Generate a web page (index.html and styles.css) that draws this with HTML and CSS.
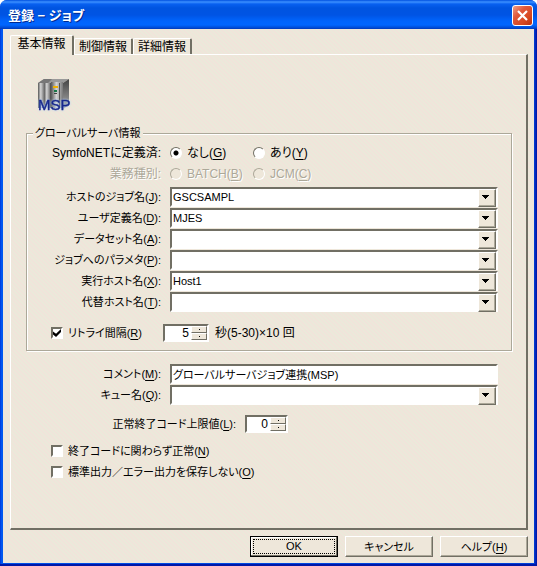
FILE: index.html
```html
<!DOCTYPE html>
<html lang="ja">
<head>
<meta charset="utf-8">
<meta name="viewport" content="width=device-width, initial-scale=1">
<title>登録 - ジョブ</title>
<link rel="stylesheet" href="styles.css">
</head>
<body>
<form class="dialog">
  <header class="titlebar">
    <h1 class="title">登録 − ジョブ</h1>
    <button class="close" type="button" aria-label="閉じる">
      <svg viewBox="0 0 19 19" width="19" height="19" aria-hidden="true"><path d="M5 5l9 9M14 5l-9 9" stroke="#fff" stroke-width="2.2"/></svg>
    </button>
  </header>
  <div class="client">
    <div class="tabs" role="tablist">
      <button class="tab tab-active" type="button" role="tab" aria-selected="true">基本情報</button>
      <button class="tab" type="button" role="tab" aria-selected="false">制御情報</button>
      <button class="tab" type="button" role="tab" aria-selected="false">詳細情報</button>
    </div>
    <main class="panel">
      <svg class="job-icon" viewBox="0 0 36 36" width="36" height="36" role="img" aria-label="MSP">
        <defs>
          <linearGradient id="metal" x1="0" x2="1" y1="0" y2="0">
            <stop offset="0" stop-color="#555"/><stop offset=".45" stop-color="#d4d4d4"/><stop offset="1" stop-color="#777"/>
          </linearGradient>
          <linearGradient id="side" x1="0" x2="0" y1="0" y2="1">
            <stop offset="0" stop-color="#444"/><stop offset="1" stop-color="#aaa"/>
          </linearGradient>
        </defs>
        <path d="M1 5l6-4h25l-6 4z" fill="#999"/>
        <path d="M1 5l6-4h8l-4 4z" fill="#777"/>
        <path d="M26 5l6-4v26l-6 4z" fill="url(#side)"/>
        <rect x="1" y="5" width="6" height="25" fill="url(#metal)"/>
        <rect x="7" y="5" width="6" height="25" fill="url(#metal)"/>
        <rect x="14" y="4" width="12" height="26" fill="url(#metal)"/>
        <path d="M13.500 5v25M22.500 5v25" stroke="#555"/>
        <rect x="16" y="8" width="5" height="2" fill="#f0b000"/>
        <rect x="17" y="12" width="3" height="2" fill="#187848"/>
        <rect x="17" y="15" width="3" height="1" fill="#444"/>
        <text class="icon-text" x="1" y="32" font-size="15">MSP</text>
      </svg>

      <fieldset class="group">
        <legend>グローバルサーバ情報</legend>
        <div class="row row-radio" role="radiogroup" aria-labelledby="sym">
          <span class="label" id="sym">SymfoNETに定義済:</span>
          <div class="radios">
            <label class="choice"><input type="radio" name="sym" checked><span>なし(<u>G</u>)</span></label>
            <label class="choice"><input type="radio" name="sym"><span>あり(<u>Y</u>)</span></label>
          </div>
        </div>
        <div class="row row-radio disabled" role="radiogroup" aria-labelledby="kind">
          <span class="label" id="kind">業務種別:</span>
          <div class="radios">
            <label class="choice"><input type="radio" name="kind" disabled><span>BATCH(<u>B</u>)</span></label>
            <label class="choice"><input type="radio" name="kind" disabled><span>JCM(<u>C</u>)</span></label>
          </div>
        </div>
        <div class="combos">
          <div class="row"><label class="label" for="job">ホストのジョブ名(<u>J</u>):</label><div class="combo"><select id="job"><option>GSCSAMPL</option></select></div></div>
          <div class="row"><label class="label" for="user">ユーザ定義名(<u>D</u>):</label><div class="combo"><select id="user"><option>MJES</option></select></div></div>
          <div class="row"><label class="label" for="data">データセット名(<u>A</u>):</label><div class="combo"><select id="data"><option></option></select></div></div>
          <div class="row"><label class="label" for="param">ジョブへのパラメタ(<u>P</u>):</label><div class="combo"><select id="param"><option></option></select></div></div>
          <div class="row"><label class="label" for="host">実行ホスト名(<u>X</u>):</label><div class="combo"><select id="host"><option>Host1</option></select></div></div>
          <div class="row"><label class="label" for="alt">代替ホスト名(<u>T</u>):</label><div class="combo"><select id="alt"><option></option></select></div></div>
        </div>
        <div class="retry">
          <label class="choice"><input type="checkbox" checked><span>リトライ間隔(<u>R</u>)</span></label>
          <div class="spinner">
            <input type="text" inputmode="numeric" value="5" aria-label="リトライ間隔">
            <div class="steps"><button type="button" aria-label="増やす"></button><button type="button" aria-label="減らす"></button></div>
          </div>
          <span class="unit">秒(5-30)×10 回</span>
        </div>
      </fieldset>

      <div class="extras">
        <div class="row"><label class="label" for="comment">コメント(<u>M</u>):</label><input class="text" id="comment" type="text" value="グローバルサーバジョブ連携(MSP)"></div>
        <div class="row"><label class="label" for="queue">キュー名(<u>Q</u>):</label><div class="combo"><select id="queue"><option></option></select></div></div>
        <div class="limit">
          <label class="label" for="limit">正常終了コード上限値(<u>L</u>):</label>
          <div class="spinner">
            <input id="limit" type="text" inputmode="numeric" value="0">
            <div class="steps"><button type="button" aria-label="増やす"></button><button type="button" aria-label="減らす"></button></div>
          </div>
        </div>
        <div class="checks">
          <label class="choice"><input type="checkbox"><span>終了コードに関わらず正常(<u>N</u>)</span></label>
          <label class="choice"><input type="checkbox"><span>標準出力／エラー出力を保存しない(<u>O</u>)</span></label>
        </div>
      </div>
    </main>
    <footer class="actions">
      <button class="button button-default" type="button"><span>OK</span></button>
      <button class="button" type="button">キャンセル</button>
      <button class="button" type="button">ヘルプ(<u>H</u>)</button>
    </footer>
  </div>
</form>
</body>
</html>
```
FILE: styles.css
```css
:root {
  --face: #eee7da;
  --shade: #aca899;
  --dark: #716f64;
  --font: "Liberation Sans", "Noto Sans CJK JP", sans-serif;
}

* { box-sizing: border-box; }

body {
  margin: 0;
  background: #fff;
  color: #000;
  font: 11px/14px var(--font);
  font-feature-settings: "palt";
}

button, input, select {
  margin: 0;
  color: inherit;
  font: inherit;
  font-feature-settings: inherit;
}

u { text-underline-offset: 2px; }

.dialog {
  display: flex;
  flex-direction: column;
  min-height: 100vh;
  padding: 0 3px 3px;
  border-radius: 7px 7px 0 0;
  background: linear-gradient(90deg, #0036d8 0, #0060f8 2px, #0050e8 3px, #0040d8 calc(100% - 3px), #0010a0 100%);
  box-shadow: inset 0 -2px 0 #0018a8;
}

.titlebar {
  display: flex;
  align-items: center;
  justify-content: space-between;
  height: 29px;
  margin: 0 -3px;
  padding: 2px 4px 0 8px;
  border-radius: 7px 7px 0 0;
  background: linear-gradient(#0050e0 0, #3c90ff 2px, #0860f0 4px, #0054e0 8px, #0054e4 15px, #0064fc 21px, #0066ff 25px, #0048d0 28px, #0038b8 29px);
}

.title {
  margin: 0;
  color: #fff;
  font-size: 13px;
  line-height: 16px;
  text-shadow: 1px 1px 0 #002a90;
}

.close {
  width: 21px;
  height: 21px;
  padding: 0;
  border: 1px solid #fff;
  border-radius: 3px;
  background: linear-gradient(135deg, #f0a088 0, #e0583c 35%, #d84820 70%, #b83010 100%);
}

.close svg { display: block; }

.client {
  display: flex;
  flex: 1;
  flex-direction: column;
  padding: 6px 6px 6px 7px;
  background: repeating-linear-gradient(45deg, #f0e4da 0 1px, #ebe9da 2px 3px);
}

.tabs {
  display: flex;
  align-items: flex-end;
  height: 19px;
}

.tab {
  width: 59px;
  height: 16px;
  padding: 0;
  border: solid;
  border-width: 1px 2px 0 1px;
  border-color: #fff var(--dark) #fff #fff;
  border-radius: 2px 2px 0 0;
  background: var(--face);
  font-size: 12px;
  line-height: 14px;
}

.tab-active {
  z-index: 1;
  width: 64px;
  height: 20px;
  margin-bottom: -1px;
  padding-bottom: 3px;
}

.panel {
  flex: 1;
  padding: 23px 14px 0 15px;
  border: solid;
  border-width: 1px 2px 2px 1px;
  border-color: #fff var(--dark) var(--dark) #fff;
}

.job-icon {
  display: block;
  margin: 0 0 12px 11px;
}

.icon-text {
  fill: #18288c;
  stroke: #18288c;
  stroke-width: .4px;
  font-feature-settings: normal;
  filter: drop-shadow(0 0 1px #b0d0f8);
}

.group {
  min-width: 0;
  margin: 0;
  padding: 2px 13px 7px 24px;
  border: 1px solid var(--shade);
  box-shadow: 1px 1px 0 #fff, inset 1px 1px 0 #fff;
}

.group legend {
  margin-left: -18px;
  padding: 0 2px;
  background: var(--face);
}

.row {
  display: grid;
  grid-template-columns: 110px minmax(0, 1fr);
  column-gap: 9px;
  align-items: center;
  height: 21px;
}

.row-radio { font-size: 12px; }

.label {
  justify-self: end;
  white-space: nowrap;
}

.combos { padding-top: 2px; }

.combo {
  display: flex;
  position: relative;
  height: 20px;
}

.combo select, .text, .spinner {
  border: 2px solid;
  border-color: var(--dark) #fff #fff var(--dark);
  border-radius: 0;
  background: #fff;
}

.combo select {
  width: 100%;
  padding: 0 20px 0 1px;
  appearance: none;
  line-height: 14px;
}

.combo::after {
  content: "";
  position: absolute;
  top: 2px;
  right: 2px;
  width: 16px;
  height: 16px;
  border: 1px solid;
  border-color: #fff var(--dark) var(--dark) #fff;
  background: linear-gradient(#000, #000) 3px 5px / 7px 1px no-repeat, linear-gradient(#000, #000) 4px 6px / 5px 1px no-repeat, linear-gradient(#000, #000) 5px 7px / 3px 1px no-repeat, linear-gradient(#000, #000) 6px 8px / 1px 1px no-repeat, var(--face);
  box-shadow: inset -1px -1px 0 var(--shade);
  pointer-events: none;
}

.text {
  width: 100%;
  height: 20px;
  padding: 0 1px;
}

.radios { display: flex; }

.radios .choice { width: 83px; }

.choice {
  display: flex;
  align-items: center;
  gap: 5px;
  white-space: nowrap;
}

.choice input {
  flex: none;
  width: 12px;
  height: 12px;
  appearance: none;
  border: 2px solid;
  border-color: var(--dark) #fff #fff var(--dark);
  background: #fff;
}

.choice input[type="radio"] {
  border-width: 1px;
  border-radius: 50%;
}

.choice input[type="radio"]:checked {
  background: radial-gradient(circle, #000 2px, #fff 3px);
}

.choice input[type="checkbox"]:checked::before {
  content: "";
  display: block;
  width: 8px;
  height: 8px;
  background: #000;
  clip-path: polygon(0 30%, 38% 60%, 100% 0, 100% 38%, 38% 100%, 0 68%);
}

.disabled {
  color: var(--shade);
  text-shadow: 1px 1px 0 #fff;
}

.disabled .choice input {
  border-color: var(--shade) #fff #fff var(--shade);
  background: var(--face);
}

.retry {
  display: flex;
  align-items: center;
  gap: 6px;
  height: 20px;
  margin-top: 11px;
}

.retry .choice { width: 106px; }

.unit { font-size: 12px; }

.spinner {
  display: flex;
  flex: none;
  width: 46px;
  height: 18px;
}

.spinner input {
  flex: 1;
  min-width: 0;
  padding: 0 2px;
  border: 0;
  background: transparent;
  font-size: 12px;
  text-align: right;
}

.steps {
  display: grid;
  flex: none;
  grid-template-rows: 1fr 1fr;
  width: 16px;
}

.steps button {
  min-height: 0;
  padding: 0;
  border: 1px solid;
  border-color: #fff var(--dark) var(--dark) #fff;
  background: linear-gradient(#000, #000) center / 1px 1px no-repeat, var(--face);
}

.extras { padding: 12px 14px 0 25px; }

.limit {
  display: grid;
  grid-template-columns: 185px auto;
  justify-content: start;
  align-items: center;
  column-gap: 9px;
  height: 18px;
  margin-top: 10px;
}

.limit .spinner { width: 43px; }

.checks { margin-top: 7px; }

.checks .choice { height: 21px; }

.actions {
  display: flex;
  justify-content: flex-end;
  gap: 7px;
  margin-top: 6px;
}

.button {
  width: 88px;
  height: 21px;
  padding: 0;
  border: 1px solid;
  border-color: #fff var(--dark) var(--dark) #fff;
  background: var(--face);
  box-shadow: inset -1px -1px 0 var(--shade);
}

.button-default {
  padding: 2px;
  border-color: #000;
  box-shadow: inset -1px -1px 0 var(--dark), inset 1px 1px 0 #fff;
}

.button-default span {
  display: block;
  border: 1px dotted #000;
  line-height: 13px;
}
```
